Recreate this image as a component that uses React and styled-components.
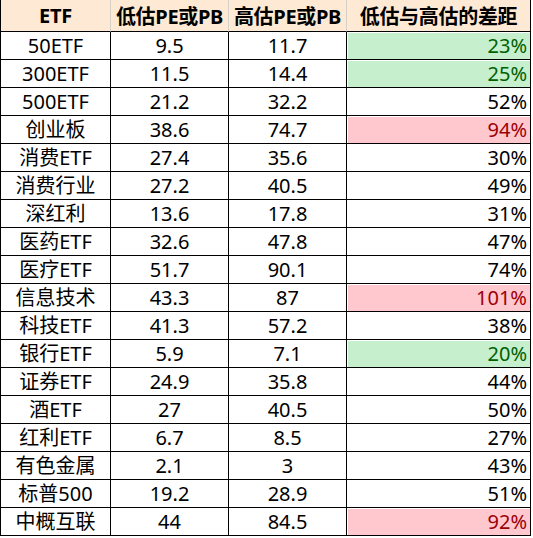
import React from "react";
import styled, { createGlobalStyle } from "styled-components";

const Global = createGlobalStyle`
  html, body { margin: 0; padding: 0; background: #fff; }
  body { font-family: "Noto Sans", "Noto Sans CJK SC", sans-serif; }
`;

const Grid = styled.div`
  display: grid;
  grid-template-columns: 110px 118px 118px 184px;
  grid-auto-rows: 28px;
  grid-template-rows: 32px;
  width: 531px;
  border-left: 1px solid #000;
  box-sizing: border-box;
  width: 531px;
`;

const HeadCell = styled.div`
  box-sizing: border-box;
  background: #fde9d4;
  border-right: 1px solid ${(p) => (p.$last ? "#000" : "#d6d0c6")};
  border-bottom: 1px solid #000;
  display: flex;
  align-items: center;
  justify-content: center;
  font-family: "Noto Sans", "Noto Sans CJK SC", sans-serif;
  font-weight: 700;
  font-size: 20px;
  color: #000;
  white-space: nowrap;
  letter-spacing: -0.3px;
`;

const Cell = styled.div`
  box-sizing: border-box;
  border-right: 1px solid #000;
  border-bottom: 1px solid #000;
  display: flex;
  align-items: center;
  justify-content: ${(p) => (p.$right ? "flex-end" : "center")};
  padding-right: ${(p) => (p.$right ? "3px" : "0")};
  font-size: 20px;
  line-height: 1;
  white-space: nowrap;
  color: ${(p) => (p.$tone === "good" ? "#006100" : p.$tone === "bad" ? "#9c0006" : "#000")};
  background: ${(p) => (p.$tone === "good" ? "#c6efce" : p.$tone === "bad" ? "#ffc7ce" : "#fff")};
  box-shadow: ${(p) => (p.$tone ? "inset 1px 1px 0 #fff" : "none")};
`;

const rows = [
  ["50ETF", "9.5", "11.7", "23%", "good"],
  ["300ETF", "11.5", "14.4", "25%", "good"],
  ["500ETF", "21.2", "32.2", "52%"],
  ["创业板", "38.6", "74.7", "94%", "bad"],
  ["消费ETF", "27.4", "35.6", "30%"],
  ["消费行业", "27.2", "40.5", "49%"],
  ["深红利", "13.6", "17.8", "31%"],
  ["医药ETF", "32.6", "47.8", "47%"],
  ["医疗ETF", "51.7", "90.1", "74%"],
  ["信息技术", "43.3", "87", "101%", "bad"],
  ["科技ETF", "41.3", "57.2", "38%"],
  ["银行ETF", "5.9", "7.1", "20%", "good"],
  ["证券ETF", "24.9", "35.8", "44%"],
  ["酒ETF", "27", "40.5", "50%"],
  ["红利ETF", "6.7", "8.5", "27%"],
  ["有色金属", "2.1", "3", "43%"],
  ["标普500", "19.2", "28.9", "51%"],
  ["中概互联", "44", "84.5", "92%", "bad"],
];

export default function App() {
  return (
    <>
      <Global />
      <Grid>
        <HeadCell>ETF</HeadCell>
        <HeadCell>低估PE或PB</HeadCell>
        <HeadCell>高估PE或PB</HeadCell>
        <HeadCell $last>低估与高估的差距</HeadCell>
        {rows.map(([name, lo, hi, gap, tone]) => (
          <React.Fragment key={name}>
            <Cell>{name}</Cell>
            <Cell>{lo}</Cell>
            <Cell>{hi}</Cell>
            <Cell $right $tone={tone}>{gap}</Cell>
          </React.Fragment>
        ))}
      </Grid>
    </>
  );
}
